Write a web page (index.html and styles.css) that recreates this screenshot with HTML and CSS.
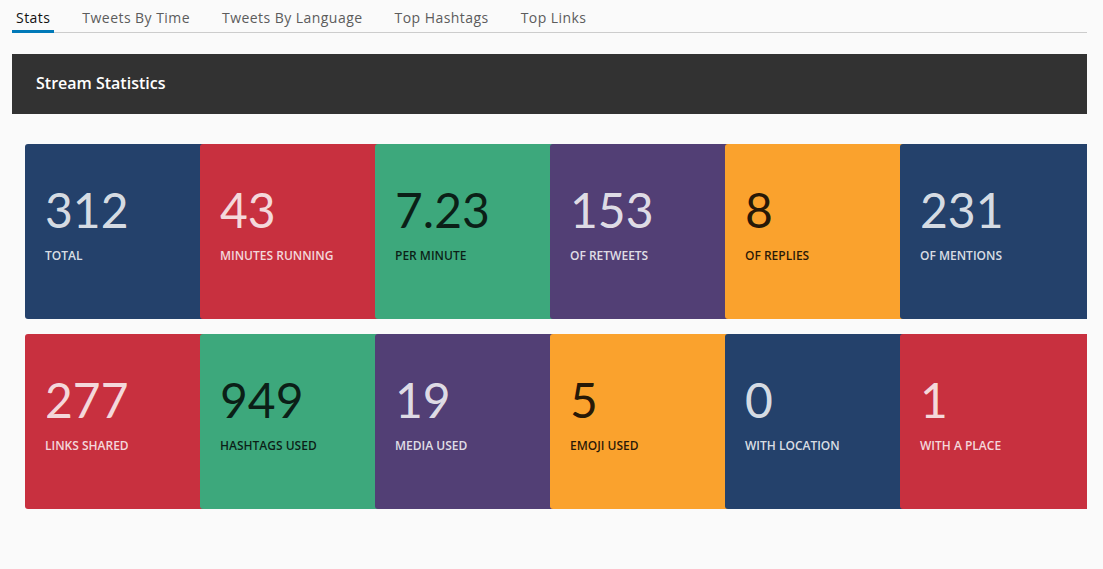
FILE: index.html
```html
<!DOCTYPE html>
<html>
<head>
<meta charset="utf-8">
<link rel="stylesheet" href="styles.css">
</head>
<body>
<div class="page">
  <nav class="tabs">
    <span class="tab active">Stats</span>
    <span class="tab">Tweets By Time</span>
    <span class="tab">Tweets By Language</span>
    <span class="tab">Top Hashtags</span>
    <span class="tab">Top Links</span>
  </nav>
  <div class="header">Stream Statistics</div>
  <div class="grid">
    <div class="row">
      <div class="card navy"><div class="num">312</div><div class="label">TOTAL</div></div>
      <div class="card red"><div class="num">43</div><div class="label">MINUTES RUNNING</div></div>
      <div class="card green"><div class="num">7.23</div><div class="label">PER MINUTE</div></div>
      <div class="card purple"><div class="num">153</div><div class="label">OF RETWEETS</div></div>
      <div class="card orange"><div class="num">8</div><div class="label">OF REPLIES</div></div>
      <div class="card navy"><div class="num">231</div><div class="label">OF MENTIONS</div></div>
    </div>
    <div class="row">
      <div class="card red"><div class="num">277</div><div class="label">LINKS SHARED</div></div>
      <div class="card green"><div class="num">949</div><div class="label">HASHTAGS USED</div></div>
      <div class="card purple"><div class="num">19</div><div class="label">MEDIA USED</div></div>
      <div class="card orange"><div class="num">5</div><div class="label">EMOJI USED</div></div>
      <div class="card navy"><div class="num">0</div><div class="label">WITH LOCATION</div></div>
      <div class="card red"><div class="num">1</div><div class="label">WITH A PLACE</div></div>
    </div>
  </div>
</div>
</body>
</html>
```

FILE: styles.css
```css
html, body {
  margin: 0;
  padding: 0;
  background: #fafafa;
  font-family: "Open Sans", "Noto Sans", sans-serif;
}
.page {
  margin-left: 12px;
  width: 1075px;
}
.tabs {
  display: flex;
  gap: 24px;
  height: 33px;
  border-bottom: 1px solid #cccccc;
  box-sizing: border-box;
}
.tab {
  padding: 8px 4px 0 4px;
  font-size: 14px;
  letter-spacing: 0.45px;
  line-height: 20px;
  color: #5c5c5c;
  box-sizing: border-box;
  height: 33px;
}
.tab.active {
  color: #111;
  border-bottom: 3px solid #0079b8;
}
.header {
  margin-top: 21px;
  height: 60px;
  background: #323232;
  color: #ffffff;
  font-size: 16px;
  font-weight: 600;
  padding-left: 24px;
  padding-bottom: 2px;
  box-sizing: border-box;
  display: flex;
  align-items: center;
}
.grid {
  padding: 30px 0 0 13px;
  overflow: hidden;
  display: flex;
  flex-direction: column;
  gap: 15px;
}
.row {
  display: flex;
}
.card {
  flex: 0 0 190px;
  margin-right: -15px;
  height: 175px;
  border-radius: 3px;
  padding: 38px 0 0 20px;
  box-sizing: border-box;
}
.num {
  font-family: "Lato", sans-serif;
  font-weight: 400;
  font-size: 48px;
  line-height: 56px;
}
.label {
  margin-top: 10px;
  font-size: 12px;
  font-weight: 600;
  line-height: 16px;
}
.navy { background: #24416b; color: rgba(255,255,255,0.84); }
.red { background: #c8303f; color: rgba(255,255,255,0.82); }
.green { background: #3da87c; color: rgba(0,0,0,0.82); }
.purple { background: #523f75; color: rgba(255,255,255,0.84); }
.orange { background: #faa22d; color: rgba(0,0,0,0.85); }
```
